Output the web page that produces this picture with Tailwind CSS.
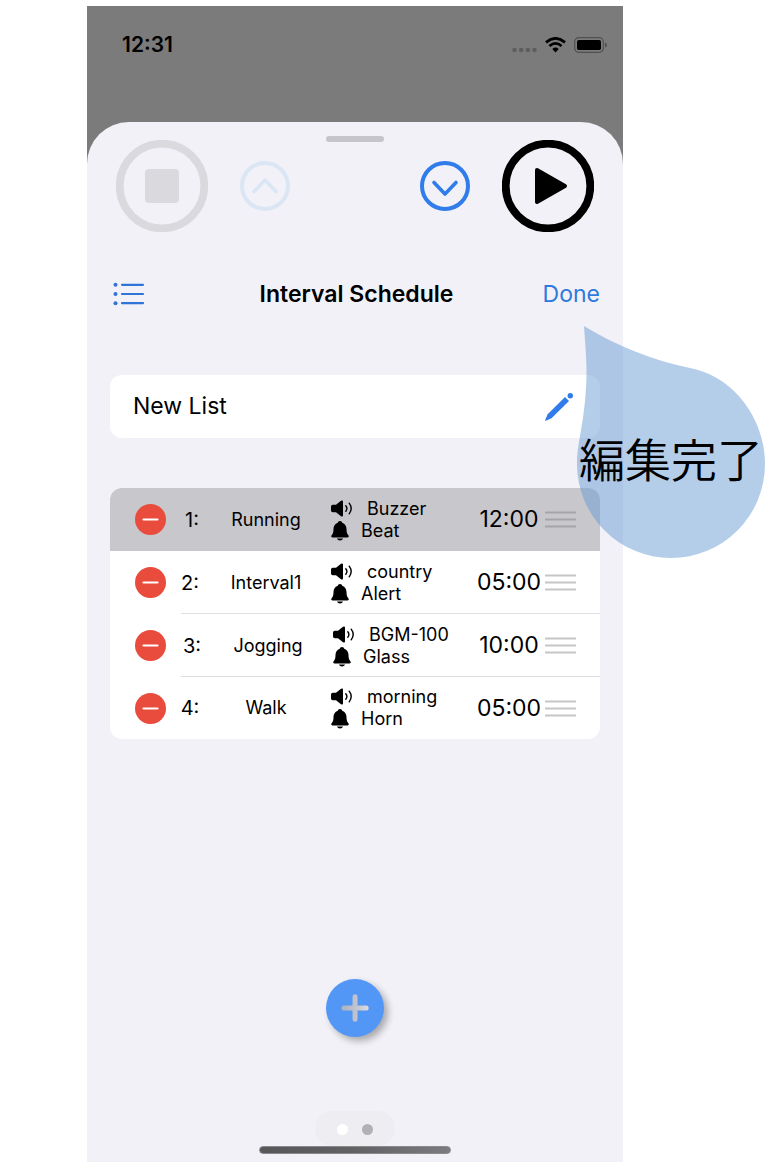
<!DOCTYPE html>
<html lang="ja">
<head>
<meta charset="utf-8">
<meta name="viewport" content="width=device-width, initial-scale=1">
<title>Interval Schedule</title>
<script src="https://cdn.jsdelivr.net/npm/@tailwindcss/browser@4"></script>
</head>
<body class="bg-white font-['Inter','Noto_Sans_CJK_JP',sans-serif] text-black">
<svg class="hidden" aria-hidden="true">
  <symbol id="speaker" viewBox="0 0 22 18">
    <path d="M1.800 4.800H5L10 .8Q12 -.3 12 1.700V15.300Q12 17.300 10 16.200L5 12.200H1.800Q0 12.200 0 10.400V6.600Q0 4.800 1.800 4.800Z"/>
    <path d="M14.800 5.700Q17 8.500 14.800 11.300M18.200 3.200Q22.200 8.500 18.200 13.800" fill="none" stroke="currentColor" stroke-width="1.400" stroke-linecap="round"/>
  </symbol>
  <symbol id="bell" viewBox="0 0 18 20">
    <path d="M9 0C10.300 0 11 .8 11.200 1.700C14.200 2.800 15.400 5 15.500 8C15.600 11.500 16 12.500 17.200 14C18.200 15.200 17.800 16.500 16.500 16.500H1.500C.2 16.500-.2 15.200.8 14C2 12.500 2.400 11.500 2.500 8C2.600 5 3.800 2.800 6.800 1.700C7 .8 7.700 0 9 0Z"/>
    <path d="M6 17.500H12Q11.500 19.600 9 19.600T6 17.500Z"/>
  </symbol>
  <symbol id="minus" viewBox="0 0 31 31">
    <circle cx="15.500" cy="15.500" r="15.500" fill="#e94b3c"/>
    <path d="M8.500 15.500H22.500" stroke="#fff" stroke-width="2.200" stroke-linecap="round"/>
  </symbol>
  <symbol id="grip" viewBox="0 0 31 17">
    <path d="M0 1.500H31M0 8.500H31M0 15.500H31" stroke="currentColor" stroke-width="1.800"/>
  </symbol>
</svg>

<div class="flex min-h-screen pt-1.5 pr-[147px] pl-[87px]">
  <div class="relative flex min-w-0 flex-1 flex-col bg-[#7b7b7b]">
    <header class="flex h-[116px] items-start justify-between pt-[25px] pr-4 pl-[35px]">
      <time class="text-[21px] leading-7 font-semibold">12:31</time>
      <div class="flex h-7 items-center">
        <svg class="mr-2 w-[25px]" viewBox="0 0 25 16" fill="#5e5e5e"><circle cx="2.500" cy="13" r="2.300"/><circle cx="9.200" cy="13" r="2.300"/><circle cx="15.900" cy="13" r="2.300"/><circle cx="22.500" cy="13" r="2.300"/></svg>
        <svg class="mr-2 w-[21px]" viewBox="0 0 21 16" fill="none" stroke="#000"><path d="M1 5.300Q10.500-2.500 20 5.300" stroke-width="2.800"/><path d="M4.400 9Q10.500 3.800 16.600 9" stroke-width="2.600"/><path d="M7.300 12Q10.500 9.200 13.700 12L10.500 15.500Z" fill="#000" stroke="none"/></svg>
        <svg class="w-[33px]" viewBox="0 0 33 16"><rect x=".7" y=".7" width="28.600" height="14.600" rx="4" fill="none" stroke="#505050" stroke-width="1.200"/><rect x="3" y="3" width="24" height="10" rx="1.800"/><path d="M31 5.500Q33 6 33 8T31 10.500Z" fill="#505050"/></svg>
      </div>
    </header>

    <main class="relative flex flex-1 flex-col rounded-t-[42px] bg-[#f2f1f7] pt-[18px] pb-2">
      <div class="absolute top-3.5 left-1/2 h-1.5 w-[58px] -translate-x-1/2 rounded-full bg-[#c5c5ca]"></div>

      <div class="flex items-center justify-between px-[29px]">
        <div class="flex items-center gap-8">
          <button type="button" aria-label="Stop" disabled><svg class="size-[92px]" viewBox="0 0 92 92"><circle cx="46" cy="46" r="42.300" fill="none" stroke="#d9d9de" stroke-width="7.800"/><rect x="29" y="29" width="34" height="34" rx="4" fill="#d9d9de"/></svg></button>
          <button type="button" aria-label="Previous" disabled><svg class="size-[50px]" viewBox="0 0 50 50" fill="none" stroke="#dbe6f5"><circle cx="25" cy="25" r="23" stroke-width="4"/><path d="M14 30.500L25 19L36 30.500" stroke-width="3.600" stroke-linecap="round" stroke-linejoin="round"/></svg></button>
        </div>
        <div class="flex items-center gap-8">
          <button type="button" aria-label="Next"><svg class="size-[50px]" viewBox="0 0 50 50" fill="none" stroke="#2f7cea"><circle cx="25" cy="25" r="23" stroke-width="4"/><path d="M14 21.500L25 33L36 21.500" stroke-width="3.600" stroke-linecap="round" stroke-linejoin="round"/></svg></button>
          <button type="button" aria-label="Play"><svg class="size-[92px]" viewBox="0 0 92 92"><circle cx="46" cy="46" r="42.300" fill="none" stroke="#000" stroke-width="7.800"/><path d="M35 30L63 46L35 62Z" stroke="#000" stroke-width="4" stroke-linejoin="round"/></svg></button>
        </div>
      </div>

      <div class="mt-[42px] grid h-10 grid-cols-[1fr_auto_1fr] items-center pr-[23px] pl-[26px]">
        <button type="button" aria-label="Lists" class="justify-self-start"><svg class="w-8" viewBox="0 0 32 24" fill="#2f74d6"><circle cx="2.500" cy="2.800" r="2"/><circle cx="2.500" cy="12" r="2"/><circle cx="2.500" cy="21.200" r="2"/><path d="M9 2.800H30M9 12H30M9 21.200H30" stroke="#2f74d6" stroke-width="2.200" stroke-linecap="round"/></svg></button>
        <h1 class="text-[23px] font-semibold">Interval Schedule</h1>
        <button type="button" class="justify-self-end text-[23px] text-[#2f7ade]">Done</button>
      </div>

      <div class="mx-[23px] mt-[61px] flex h-[63px] items-center rounded-xl bg-white pr-[27px] pl-[23px]">
        <input type="text" aria-label="List name" value="New List" class="min-w-0 flex-1 bg-transparent text-[23px] outline-none">
        <button type="button" aria-label="Edit name"><svg class="size-7" viewBox="0 0 28 28" fill="#2f7cea"><path d="M20 4L24 8L6.500 25.300L.8 27.700Q-.2 28 .2 26.900L2.700 21.200Z"/><circle cx="25.300" cy="2.700" r="2.700"/></svg></button>
      </div>

      <ul class="mx-[23px] mt-[50px] overflow-hidden rounded-xl bg-white">
        <li class="relative grid h-[63px] grid-cols-[31px_48px_104px_1fr_72px_31px] items-center bg-[#c8c7cc] pr-6 pl-[25px]">
          <button type="button" aria-label="Delete Running"><svg class="size-[31px]"><use href="#minus"/></svg></button>
          <span class="pl-1 text-center text-xl">1:</span>
          <span class="text-center text-lg">Running</span>
          <div class="pl-[13px] text-lg leading-[22px]">
            <div class="flex items-center gap-3.5"><svg class="h-[18px] w-[22px]"><use href="#speaker"/></svg>Buzzer</div>
            <div class="flex items-center gap-3"><svg class="h-5 w-[18px]"><use href="#bell"/></svg>Beat</div>
          </div>
          <time class="text-center text-[23px]">12:00</time>
          <button type="button" aria-label="Move Running" class="text-[#a5a5a9]"><svg class="h-[17px] w-[31px]"><use href="#grip"/></svg></button>
        </li>
        <li class="relative grid h-[63px] grid-cols-[31px_48px_104px_1fr_72px_31px] items-center pr-6 pl-[25px] after:absolute after:right-0 after:bottom-0 after:left-[71px] after:h-px after:bg-[#dfdfe2]">
          <button type="button" aria-label="Delete Interval1"><svg class="size-[31px]"><use href="#minus"/></svg></button>
          <span class="text-center text-xl">2:</span>
          <span class="text-center text-lg">Interval1</span>
          <div class="pl-[13px] text-lg leading-[22px]">
            <div class="flex items-center gap-3.5"><svg class="h-[18px] w-[22px]"><use href="#speaker"/></svg>country</div>
            <div class="flex items-center gap-3"><svg class="h-5 w-[18px]"><use href="#bell"/></svg>Alert</div>
          </div>
          <time class="text-center text-[23px]">05:00</time>
          <button type="button" aria-label="Move Interval1" class="text-[#c6c6c8]"><svg class="h-[17px] w-[31px]"><use href="#grip"/></svg></button>
        </li>
        <li class="relative grid h-[63px] grid-cols-[31px_48px_104px_1fr_72px_31px] items-center pr-6 pl-[25px] after:absolute after:right-0 after:bottom-0 after:left-[71px] after:h-px after:bg-[#dfdfe2]">
          <button type="button" aria-label="Delete Jogging"><svg class="size-[31px]"><use href="#minus"/></svg></button>
          <span class="pl-1 text-center text-xl">3:</span>
          <span class="pl-1 text-center text-lg">Jogging</span>
          <div class="pl-[15px] text-lg leading-[22px]">
            <div class="flex items-center gap-3.5"><svg class="h-[18px] w-[22px]"><use href="#speaker"/></svg>BGM-100</div>
            <div class="flex items-center gap-3"><svg class="h-5 w-[18px]"><use href="#bell"/></svg>Glass</div>
          </div>
          <time class="text-center text-[23px]">10:00</time>
          <button type="button" aria-label="Move Jogging" class="text-[#c6c6c8]"><svg class="h-[17px] w-[31px]"><use href="#grip"/></svg></button>
        </li>
        <li class="relative grid h-[62px] grid-cols-[31px_48px_104px_1fr_72px_31px] items-center pr-6 pl-[25px]">
          <button type="button" aria-label="Delete Walk"><svg class="size-[31px]"><use href="#minus"/></svg></button>
          <span class="text-center text-xl">4:</span>
          <span class="text-center text-lg">Walk</span>
          <div class="pl-[13px] text-lg leading-[22px]">
            <div class="flex items-center gap-3.5"><svg class="h-[18px] w-[22px]"><use href="#speaker"/></svg>morning</div>
            <div class="flex items-center gap-3"><svg class="h-5 w-[18px]"><use href="#bell"/></svg>Horn</div>
          </div>
          <time class="text-center text-[23px]">05:00</time>
          <button type="button" aria-label="Move Walk" class="text-[#c6c6c8]"><svg class="h-[17px] w-[31px]"><use href="#grip"/></svg></button>
        </li>
      </ul>

      <button type="button" aria-label="Add interval" class="mx-auto mt-auto mb-[74px] flex size-[58px] items-center justify-center rounded-full bg-[#5297f5] shadow-[4px_4px_7px_rgba(0,0,0,0.3)]">
        <svg class="size-7" viewBox="0 0 28 28"><defs><linearGradient id="plus" x1="0" x2="1"><stop offset="0" stop-color="#a9b1c0"/><stop offset=".6" stop-color="#c3c6ce"/><stop offset="1" stop-color="#dcdce2"/></linearGradient></defs><path fill="url(#plus)" d="M11.500 2.500Q11.500.3 14 .3T16.500 2.500V11.500H25.500Q27.700 11.500 27.700 14T25.500 16.500H16.500V25.500Q16.500 27.700 14 27.700T11.500 25.500V16.500H2.500Q.3 16.500.3 14T2.500 11.500H11.500Z"/></svg>
      </button>
      <div class="mx-auto flex h-[35px] w-20 items-center justify-center gap-3.5 rounded-[17px] bg-[#eeeef2] pt-0.5">
        <button type="button" aria-label="Page 1" class="size-[11px] rounded-full bg-white"></button>
        <button type="button" aria-label="Page 2" class="size-[11px] rounded-full bg-[#b1b1b4]"></button>
      </div>
      <div class="mx-auto h-2 w-48 rounded-full border border-[#8a8a8d] bg-linear-to-r from-[#57575a] via-[#626265] to-[#7c7c80]"></div>
    </main>

    <aside class="absolute top-80 -right-[142px] h-[232px] w-[188px]">
      <svg class="absolute inset-0 size-full" viewBox="0 0 188 232" fill="#699bd3" fill-opacity=".5"><path d="M7 0C40 20 75 34 113 42C156 50 188 92 188 138A94 94 0 0 1 0 138C0 120 5 105 8 75S9 30 7 0Z"/></svg>
      <p class="relative pt-[98px] text-center font-['Noto_Sans_CJK_JP',sans-serif] text-[46px] leading-[66px] font-[350] whitespace-nowrap">編集完了</p>
    </aside>
  </div>
</div>
</body>
</html>
